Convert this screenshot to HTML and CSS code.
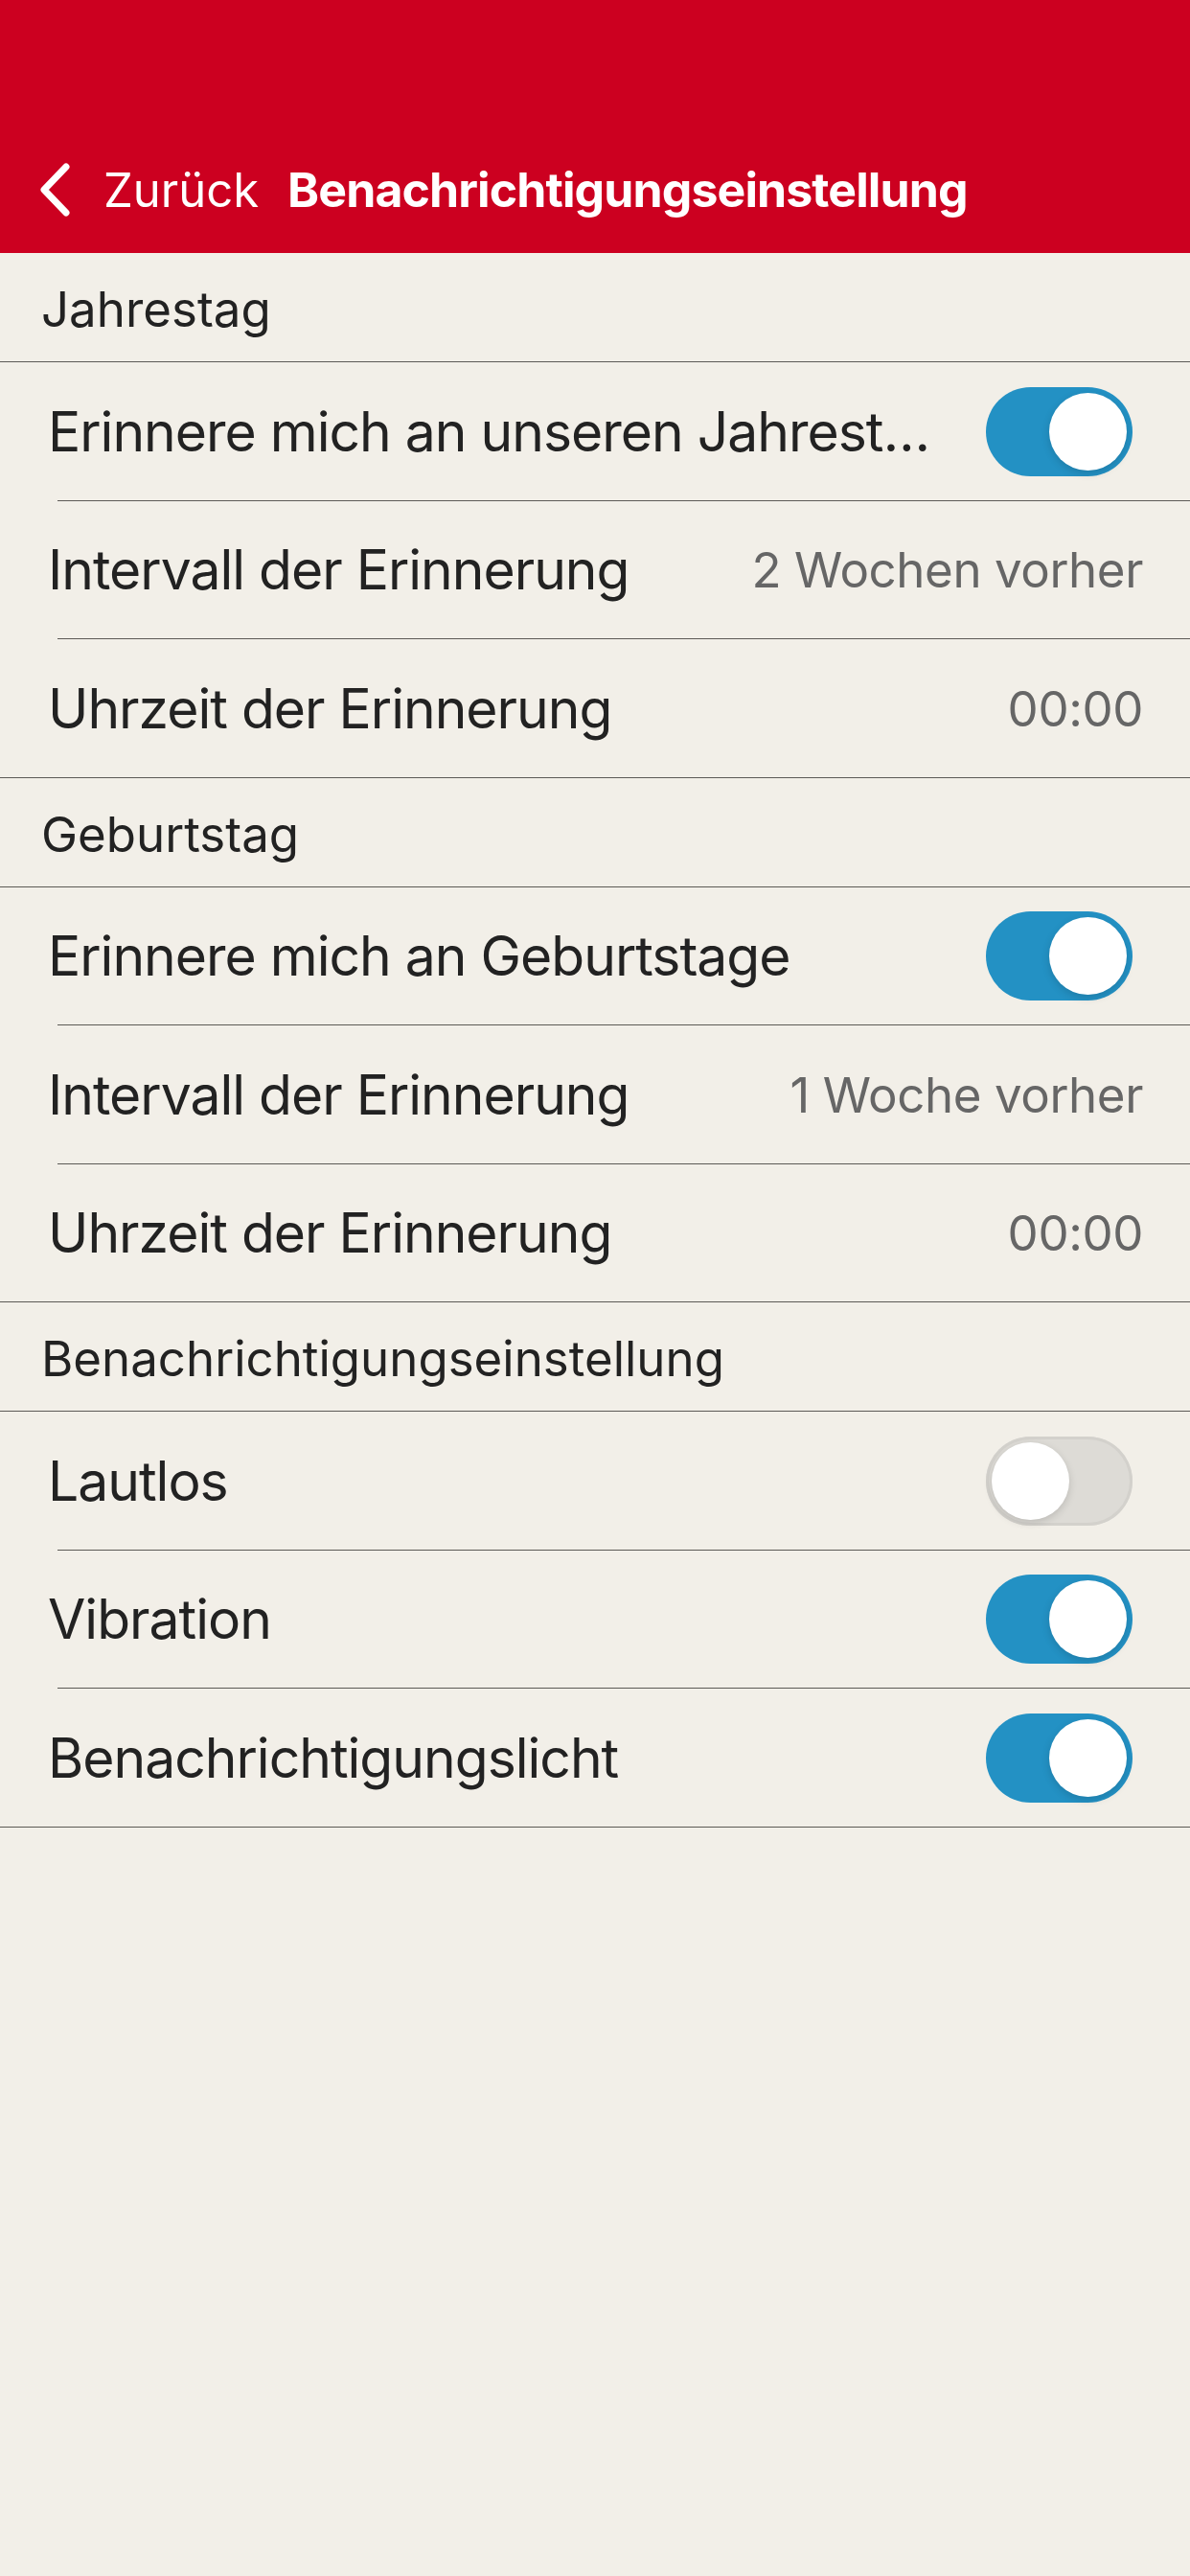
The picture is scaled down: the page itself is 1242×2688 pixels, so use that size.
FILE: index.html
```html
<!DOCTYPE html>
<html>
  <head>
    <title>Benachrichtigungseinstellung</title>
    <link rel="stylesheet" href="styles.css">
  </head>
  <body>
    <header class="top-bar">
      <div class="nav">
        <a class="back" href="#">
          <svg class="chevron" width="34" height="58" viewBox="0 0 34 58">
            <path d="M29 5 L6 29 L29 53" fill="none" stroke="#fff" stroke-width="7" stroke-linecap="round" stroke-linejoin="round"/>
          </svg>
          <span>Zurück</span>
        </a>
        <h1 class="title">Benachrichtigungseinstellung</h1>
      </div>
    </header>

    <section class="group">
      <div class="group-title">Jahrestag</div>
      <div class="row">
        <span class="label ellipsis">Erinnere mich an unseren Jahrestag</span>
        <span class="switch on"><span class="knob"></span></span>
      </div>
      <div class="row">
        <span class="label">Intervall der Erinnerung</span>
        <span class="value">2 Wochen vorher</span>
      </div>
      <div class="row last">
        <span class="label">Uhrzeit der Erinnerung</span>
        <span class="value">00:00</span>
      </div>
    </section>

    <section class="group">
      <div class="group-title">Geburtstag</div>
      <div class="row">
        <span class="label">Erinnere mich an Geburtstage</span>
        <span class="switch on"><span class="knob"></span></span>
      </div>
      <div class="row">
        <span class="label">Intervall der Erinnerung</span>
        <span class="value">1 Woche vorher</span>
      </div>
      <div class="row last">
        <span class="label">Uhrzeit der Erinnerung</span>
        <span class="value">00:00</span>
      </div>
    </section>

    <section class="group">
      <div class="group-title">Benachrichtigungseinstellung</div>
      <div class="row">
        <span class="label">Lautlos</span>
        <span class="switch"><span class="knob"></span></span>
      </div>
      <div class="row">
        <span class="label">Vibration</span>
        <span class="switch on"><span class="knob"></span></span>
      </div>
      <div class="row last">
        <span class="label">Benachrichtigungslicht</span>
        <span class="switch on"><span class="knob"></span></span>
      </div>
    </section>
  </body>
</html>
```

FILE: styles.css
```css
* {
  box-sizing: border-box;
  margin: 0;
  padding: 0;
}

body {
  font-family: Inter, "Noto Sans", sans-serif;
  background-color: #f2efe8;
  color: #222;
  width: 1242px;
  min-height: 2688px;
}

/* Barra roja superior */
.top-bar {
  height: 264px;
  background-color: #cc0020;
  padding-top: 132px;
}

.nav {
  height: 132px;
  display: flex;
  align-items: center;
  padding-left: 40px;
  gap: 30px;
}

.back {
  display: flex;
  align-items: center;
  gap: 34px;
  color: #fff;
  text-decoration: none;
  font-size: 49px;
}

.title {
  color: #fff;
  font-size: 50px;
  font-weight: 700;
  letter-spacing: -0.9px;
}

/* Grupos */
.group-title {
  height: 114px;
  display: flex;
  align-items: center;
  padding-left: 43px;
  padding-top: 4px;
  font-size: 51px;
  border-bottom: 1px solid #5c5a56;
}

.row {
  height: 144.5px;
  display: flex;
  align-items: center;
  justify-content: space-between;
  padding-left: 50px;
  padding-right: 60px;
  position: relative;
  font-size: 57px;
  letter-spacing: -1px;
}

.row::after {
  content: "";
  position: absolute;
  left: 60px;
  right: 0;
  bottom: 0;
  border-bottom: 1px solid #5c5a56;
}

.row.last::after {
  left: 0;
}

.label {
  white-space: nowrap;
}

.ellipsis {
  max-width: 935px;
  overflow: hidden;
  text-overflow: ellipsis;
}

.value {
  color: #666;
  font-size: 51px;
  letter-spacing: -0.4px;
  margin-right: -11px;
}

/* Interruptor */
.switch {
  flex: none;
  width: 153px;
  height: 93px;
  border-radius: 47px;
  background-color: #dddbd6;
  box-shadow: inset 0 0 0 3px #d3d1cc;
  position: relative;
}

.switch.on {
  background-color: #2391c4;
  box-shadow: none;
}

.knob {
  position: absolute;
  top: 6px;
  left: 6px;
  width: 81px;
  height: 81px;
  border-radius: 50%;
  background-color: #fff;
  box-shadow: 0 3px 8px rgba(0, 0, 0, 0.15);
}

.switch.on .knob {
  left: 66px;
}
```
